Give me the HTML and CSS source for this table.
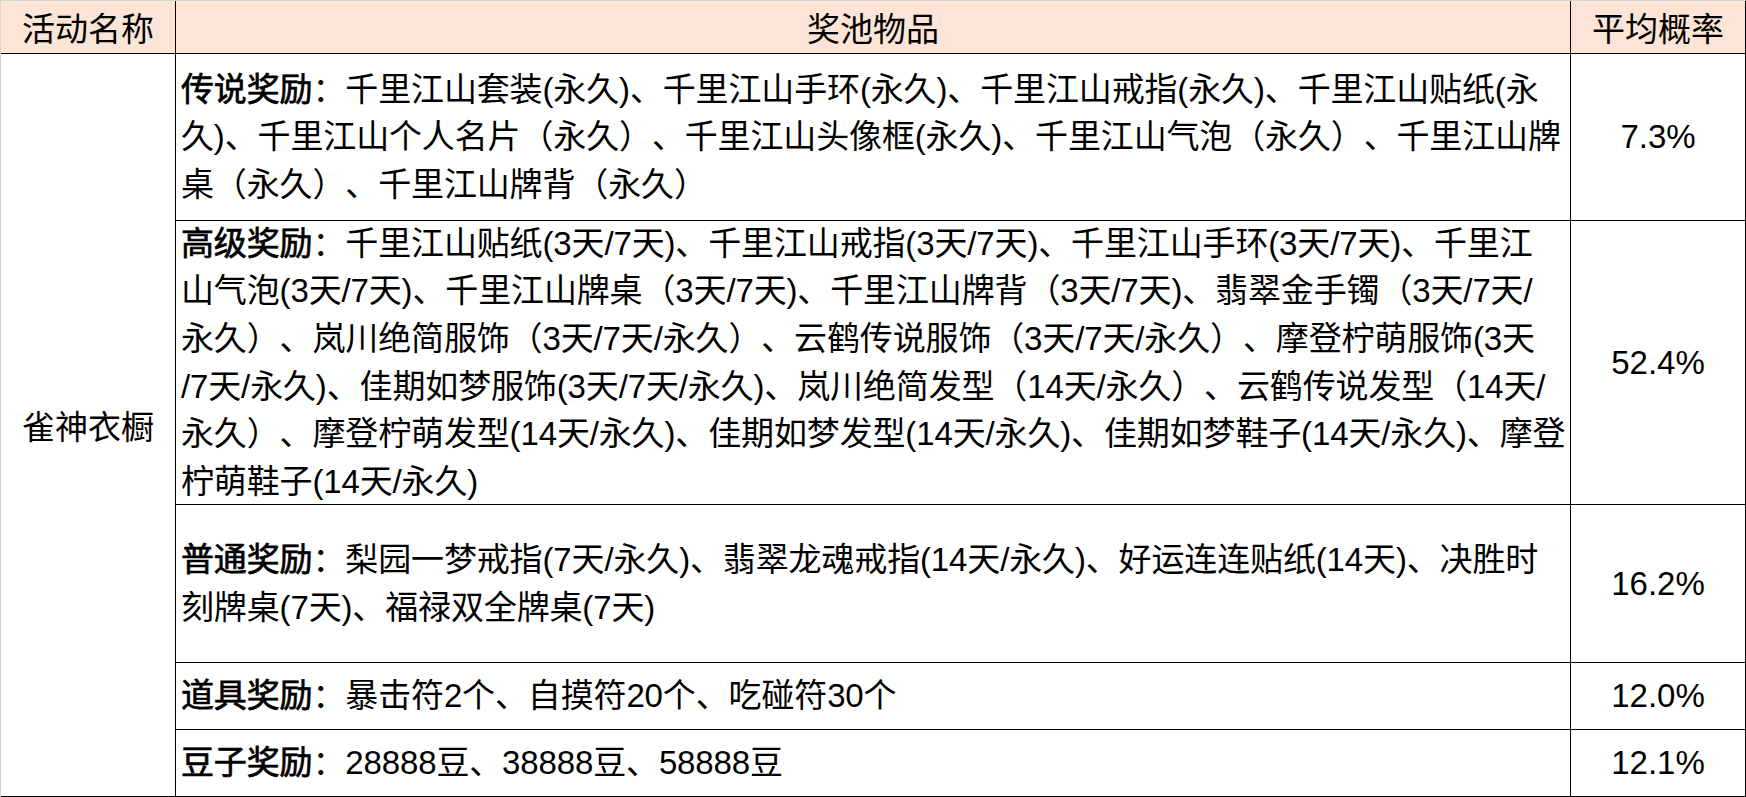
FILE: index.html
```html
<!DOCTYPE html>
<html lang="zh-CN">
<head>
<meta charset="utf-8">
<title>奖池物品</title>
<link rel="stylesheet" href="styles.css">
</head>
<body>
<div class="sheet">
  <div class="cell head center">活动名称</div>
  <div class="cell head center">奖池物品</div>
  <div class="cell head center">平均概率</div>

  <div class="cell center name">雀神衣橱</div>

  <div class="cell items"><div class="lines"><b class="label">传说奖励</b>：千里江山套装(永久)、千里江山手环(永久)、千里江山戒指(永久)、千里江山贴纸(永<br>久)、千里江山个人名片（永久）、千里江山头像框(永久)、千里江山气泡（永久）、千里江山牌<br>桌（永久）、千里江山牌背（永久）</div></div>
  <div class="cell center">7.3%</div>

  <div class="cell items"><div class="lines"><b class="label">高级奖励</b>：千里江山贴纸(3天/7天)、千里江山戒指(3天/7天)、千里江山手环(3天/7天)、千里江<br>山气泡(3天/7天)、千里江山牌桌（3天/7天)、千里江山牌背（3天/7天)、翡翠金手镯（3天/7天/<br>永久）、岚川绝简服饰（3天/7天/永久）、云鹤传说服饰（3天/7天/永久）、摩登柠萌服饰(3天<br>/7天/永久)、佳期如梦服饰(3天/7天/永久)、岚川绝简发型（14天/永久）、云鹤传说发型（14天/<br>永久）、摩登柠萌发型(14天/永久)、佳期如梦发型(14天/永久)、佳期如梦鞋子(14天/永久)、摩登<br>柠萌鞋子(14天/永久)</div></div>
  <div class="cell center">52.4%</div>

  <div class="cell items"><div class="lines"><b class="label">普通奖励</b>：梨园一梦戒指(7天/永久)、翡翠龙魂戒指(14天/永久)、好运连连贴纸(14天)、决胜时<br>刻牌桌(7天)、福禄双全牌桌(7天)</div></div>
  <div class="cell center">16.2%</div>

  <div class="cell items"><div class="lines"><b class="label">道具奖励</b>：暴击符2个、自摸符20个、吃碰符30个</div></div>
  <div class="cell center">12.0%</div>

  <div class="cell items"><div class="lines"><b class="label">豆子奖励</b>：28888豆、38888豆、58888豆</div></div>
  <div class="cell center">12.1%</div>
</div>
</body>
</html>
```

FILE: styles.css
```css
html, body {
  margin: 0;
  padding: 0;
  background: #ffffff;
}

body {
  font-family: "Liberation Sans", "Noto Sans CJK SC", sans-serif;
  font-size: 33px;
  color: #000000;
  text-spacing-trim: space-all;
}

.sheet {
  box-sizing: border-box;
  width: 1746px;
  height: 797px;
  display: grid;
  grid-template-columns: 175px 1395px 175px;
  grid-template-rows: 53px 167px 284px 158px 67px 67px;
  border-top: 1px solid #d4d4d4;
  border-left: 1px solid #d4d4d4;
}

.cell {
  box-sizing: border-box;
  border-right: 1px solid #000000;
  border-bottom: 1px solid #000000;
  display: flex;
  align-items: center;
  min-width: 0;
  min-height: 0;
}

.head {
  background: #fce4d6;
}

.center {
  justify-content: center;
  text-align: center;
}

.name {
  grid-row: 2 / 7;
}

.items {
  padding-left: 5px;
}

.lines {
  white-space: nowrap;
  line-height: 47.6px;
  letter-spacing: -0.14px;
}

.label {
  font-weight: 400;
  -webkit-text-stroke: 0.7px currentColor;
}
```
